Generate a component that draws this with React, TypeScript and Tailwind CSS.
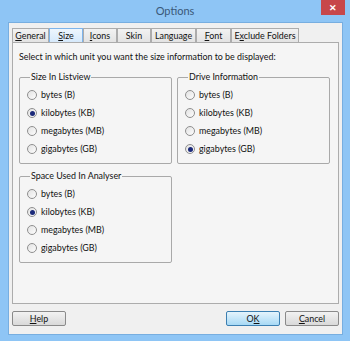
import React from "react";

const tabs = [
  { label: "General", key: "G", rest: "eneral", w: 37 },
  { label: "Size", key: "S", rest: "ize", w: 34, active: true },
  { label: "Icons", key: "I", rest: "cons", w: 34 },
  { label: "Skin", key: "", rest: "Skin", w: 34 },
  { label: "Language", key: "", rest: "Language", w: 45 },
  { label: "Font", key: "F", rest: "ont", w: 35 },
  { label: "Exclude Folders", key: "", rest: "", w: 68 },
];

const units = ["bytes (B)", "kilobytes (KB)", "megabytes (MB)", "gigabytes (GB)"];

function Radio({ checked }: { checked?: boolean }) {
  return (
    <span className="w-[10px] h-[10px] rounded-full border border-[#8f8f8f] bg-gradient-to-br from-[#e2e2e2] to-[#fdfdfd] flex items-center justify-center shrink-0">
      {checked && <span className="w-[5px] h-[5px] rounded-full bg-[#1b2a7a]" />}
    </span>
  );
}

function Group({ title, selected }: { title: string; selected: number }) {
  return (
    <fieldset className="border border-[#a9a9a9] rounded-[2px] pl-[7px] pt-[1px] pb-[5px]">
      <legend className="ml-[3px] px-[1px] leading-[16px]">{title}</legend>
      {units.map((u, i) => (
        <div key={u} className="h-[18px] flex items-center gap-[4px]">
          <Radio checked={i === selected} />
          <span>{u}</span>
        </div>
      ))}
    </fieldset>
  );
}

function Btn({ children, primary, w }: { children: React.ReactNode; primary?: boolean; w: string }) {
  return (
    <div
      className={`${w} h-[15px] rounded-[2px] border flex items-center justify-center ${
        primary
          ? "border-[#3c7fb1] bg-gradient-to-b from-[#e5f4fc] to-[#a7d9f5]"
          : "border-[#8a8a8a] bg-gradient-to-b from-[#f2f2f2] to-[#d9d9d9]"
      }`}
    >
      {children}
    </div>
  );
}

export default function App() {
  return (
    <div
      className="w-[350px] h-[341px] bg-[#8ec5f5] relative text-[8.9px] text-[#111]"
      style={{ fontFamily: 'Lato, "Noto Sans", sans-serif' }}
    >
      {/* title bar */}
      <div className="h-[22px] flex items-center justify-center text-[11px] text-[#3a5878] pt-[1px]">Options</div>
      <div className="absolute top-0 left-[321px] w-[24px] h-[15px] bg-[#c7474a] flex items-center justify-center text-white text-[9px] font-bold">
        ✕
      </div>

      {/* client area */}
      <div className="ml-[8px] mr-[7px] h-[313px] bg-[#f0f0f0] border border-[#77aee0] px-[3px] pt-[5px]">
        {/* tabs */}
        <div className="flex h-[14px] items-end">
          {tabs.map((t) => (
            <div
              key={t.label}
              style={{ width: t.w }}
              className={`h-[14px] border border-b-0 flex items-center justify-center ${
                t.active
                  ? "bg-gradient-to-b from-[#eef6fd] to-[#d6e9fb] border-[#7eb4ea]"
                  : "bg-gradient-to-b from-[#f2f2f2] to-[#e3e3e3] border-[#acacac]"
              }`}
            >
              {t.label === "Exclude Folders" ? (
                <span>
                  E<u>x</u>clude Folders
                </span>
              ) : t.key ? (
                <span>
                  <u>{t.key}</u>
                  {t.rest}
                </span>
              ) : (
                <span>{t.rest}</span>
              )}
            </div>
          ))}
        </div>

        {/* panel */}
        <div className="h-[262px] bg-[#f5f5f5] border border-[#acacac] px-[6px] pt-[6px]">
          <div className="leading-[16px]">Select in which unit you want the size information to be displayed:</div>
          <div className="grid grid-cols-[153px_153px] gap-x-[5px] mt-[4px]">
            <Group title="Size In Listview" selected={1} />
            <Group title="Drive Information" selected={3} />
          </div>
          <div className="grid grid-cols-[153px_153px] mt-[4px]">
            <Group title="Space Used In Analyser" selected={1} />
          </div>
        </div>

        {/* buttons */}
        <div className="flex mt-[7px]">
          <Btn w="w-[54px]">
            <span>
              <u>H</u>elp
            </span>
          </Btn>
          <div className="flex-1" />
          <div className="flex gap-[5px]">
            <Btn w="w-[54px]" primary>
              <span>
                O<u>K</u>
              </span>
            </Btn>
            <Btn w="w-[54px]">
              <span>
                <u>C</u>ancel
              </span>
            </Btn>
          </div>
        </div>
      </div>
    </div>
  );
}
